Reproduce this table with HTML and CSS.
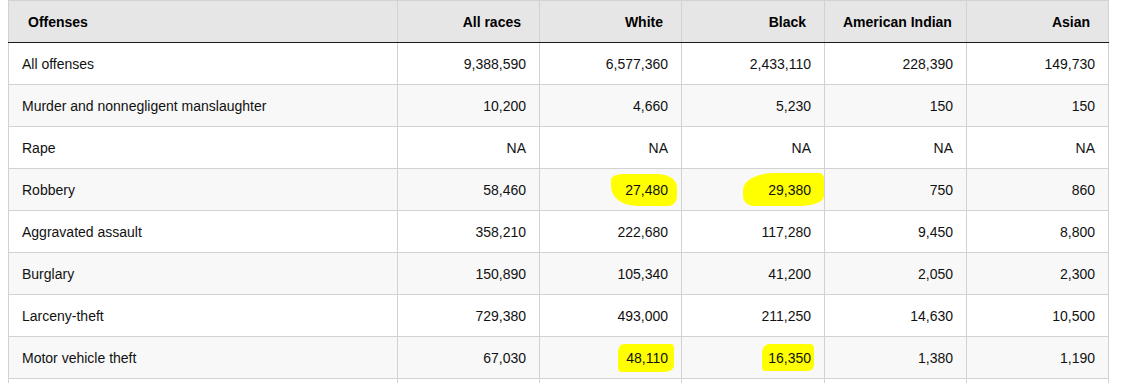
FILE: index.html
```html
<!DOCTYPE html>
<html>
<head>
<meta charset="utf-8">
<link rel="stylesheet" href="styles.css">
</head>
<body>
<table class="data">
  <colgroup>
    <col class="c-first"><col class="c-num"><col class="c-num"><col class="c-num3"><col class="c-num"><col class="c-num">
  </colgroup>
  <thead>
    <tr>
      <th class="left">Offenses</th>
      <th>All races</th>
      <th>White</th>
      <th>Black</th>
      <th>American Indian</th>
      <th>Asian</th>
    </tr>
  </thead>
  <tbody>
    <tr><td class="left">All offenses</td><td>9,388,590</td><td>6,577,360</td><td>2,433,110</td><td>228,390</td><td>149,730</td></tr>
    <tr><td class="left">Murder and nonnegligent manslaughter</td><td>10,200</td><td>4,660</td><td>5,230</td><td>150</td><td>150</td></tr>
    <tr><td class="left">Rape</td><td>NA</td><td>NA</td><td>NA</td><td>NA</td><td>NA</td></tr>
    <tr><td class="left">Robbery</td><td>58,460</td><td><span class="hl hl-a">27,480</span></td><td><span class="hl hl-b">29,380</span></td><td>750</td><td>860</td></tr>
    <tr><td class="left">Aggravated assault</td><td>358,210</td><td>222,680</td><td>117,280</td><td>9,450</td><td>8,800</td></tr>
    <tr><td class="left">Burglary</td><td>150,890</td><td>105,340</td><td>41,200</td><td>2,050</td><td>2,300</td></tr>
    <tr><td class="left">Larceny-theft</td><td>729,380</td><td>493,000</td><td>211,250</td><td>14,630</td><td>10,500</td></tr>
    <tr><td class="left">Motor vehicle theft</td><td>67,030</td><td><span class="hl hl-c">48,110</span></td><td><span class="hl hl-d">16,350</span></td><td>1,380</td><td>1,190</td></tr>
    <tr><td class="left">&nbsp;</td><td></td><td></td><td></td><td></td><td></td></tr>
  </tbody>
</table>
</body>
</html>
```
FILE: styles.css
```css
html, body {
  margin: 0;
  padding: 0;
  background: #ffffff;
}
body {
  padding: 0 8px;
  font-family: "Liberation Sans", Arial, sans-serif;
  font-size: 14px;
  color: #111;
  overflow: hidden;
  height: 383px;
}
.data {
  border-collapse: collapse;
  table-layout: fixed;
  width: 1101px;
}
.c-first { width: 389px; }
.c-num { width: 142px; }
.c-num3 { width: 143px; }
.data th, .data td {
  border: 1px solid #d2d2d2;
  height: 42px;
  box-sizing: border-box;
  text-align: right;
  white-space: nowrap;
  vertical-align: middle;
  padding-top: 1px;
}
.data th {
  background: #e6e6e6;
  font-weight: bold;
  color: #000;
  padding-left: 18px;
  padding-right: 18px;
  border-bottom: 1px solid #1a1a1a;
}
.data td {
  padding-left: 13px;
  padding-right: 13px;
}
.data th.left, .data td.left { text-align: left; }
.data th.left { padding-left: 19px; }
.data tbody tr:nth-child(even) td { background: #f8f8f8; }
.hl {
  display: inline-block;
  background: #ffff00;
  position: relative;
}
.hl-a {
  padding: 8px 9px 8px 14px;
  margin: -8px -9px -8px -14px;
  border-radius: 12px 30% 8px 40% / 6px 40% 10px 60%;
}
.hl-b {
  padding: 9px 13px 8px 25px;
  margin: -9px -13px -8px -25px;
  border-radius: 40% 4px 30% 10px / 50% 6px 30% 30%;
}
.hl-c {
  padding: 6px 6px 6px 8px;
  margin: -6px -6px -6px -8px;
  border-radius: 6px 3px 10px 4px / 8px 4px 6px 4px;
}
.hl-d {
  padding: 6px 3px 5px 6px;
  margin: -6px -3px -5px -6px;
  border-radius: 8px 4px 6px 3px;
}
```
